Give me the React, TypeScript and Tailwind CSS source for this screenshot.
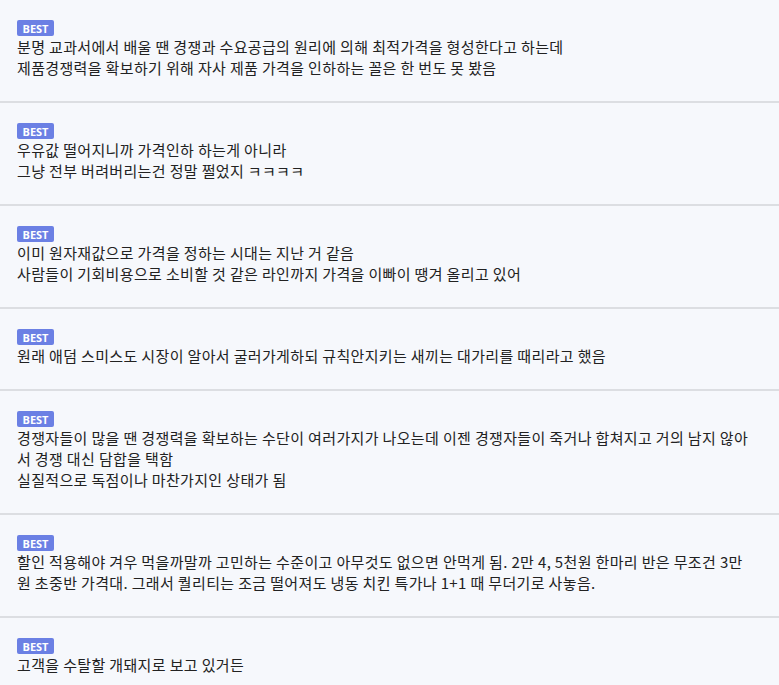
import React from "react";

const items: string[][] = [
  [
    "분명 교과서에서 배울 땐 경쟁과 수요공급의 원리에 의해 최적가격을 형성한다고 하는데",
    "제품경쟁력을 확보하기 위해 자사 제품 가격을 인하하는 꼴은 한 번도 못 봤음",
  ],
  ["우유값 떨어지니까 가격인하 하는게 아니라", "그냥 전부 버려버리는건 정말 쩔었지 ㅋㅋㅋㅋ"],
  [
    "이미 원자재값으로 가격을 정하는 시대는 지난 거 같음",
    "사람들이 기회비용으로 소비할 것 같은 라인까지 가격을 이빠이 땡겨 올리고 있어",
  ],
  ["원래 애덤 스미스도 시장이 알아서 굴러가게하되 규칙안지키는 새끼는 대가리를 때리라고 했음"],
  [
    "경쟁자들이 많을 땐 경쟁력을 확보하는 수단이 여러가지가 나오는데 이젠 경쟁자들이 죽거나 합쳐지고 거의 남지 않아",
    "서 경쟁 대신 담합을 택함",
    "실질적으로 독점이나 마찬가지인 상태가 됨",
  ],
  [
    "할인 적용해야 겨우 먹을까말까 고민하는 수준이고 아무것도 없으면 안먹게 됨. 2만 4, 5천원 한마리 반은 무조건 3만",
    "원 초중반 가격대. 그래서 퀄리티는 조금 떨어져도 냉동 치킨 특가나 1+1 때 무더기로 사놓음.",
  ],
  ["고객을 수탈할 개돼지로 보고 있거든"],
];

export default function App() {
  return (
    <div
      className="w-[779px] h-[685px] overflow-hidden bg-[#f6f8fc]"
      style={{ fontFamily: '"Noto Sans CJK KR", "Noto Sans", sans-serif' }}
    >
      {items.map((lines, i) => (
        <div key={i} className="border-b-2 border-[#dcdee2] pl-[17px] pr-[4px] pt-[20px] pb-[23px]">
          <div className="flex">
            <span
              className="inline-flex h-[16px] w-[37px] items-center justify-center rounded-[2px] bg-[#6b80e4] text-[11px] font-bold leading-none text-white"
              style={{ fontFamily: '"Open Sans", "Noto Sans", sans-serif' }}
            >
              BEST
            </span>
          </div>
          <div className="text-[15px] leading-[21px] tracking-[0.35px] text-[#222]">
            {lines.map((l, j) => (
              <div key={j} className="whitespace-nowrap">
                {l}
              </div>
            ))}
          </div>
        </div>
      ))}
    </div>
  );
}
